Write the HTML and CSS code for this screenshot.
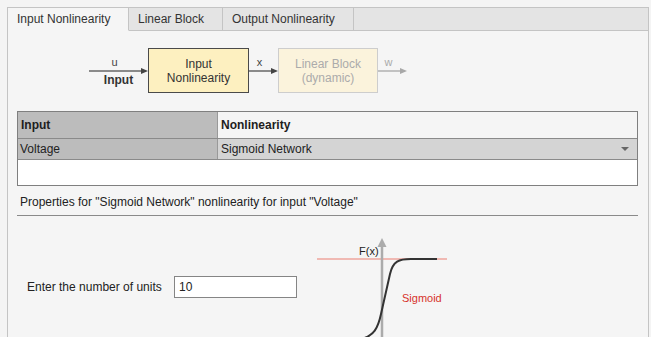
FILE: index.html
```html
<!DOCTYPE html>
<html lang="en">
<head>
    <meta charset="UTF-8">
    <title>Nonlinearity</title>
    <link rel="stylesheet" href="styles.css">
</head>
<body>

    <div class="panel">
        <div class="tabs">
            <div class="tab tab-on" style="width:121px">Input Nonlinearity</div>
            <div class="tab" style="width:94px">Linear Block</div>
            <div class="tab" style="width:131px">Output Nonlinearity</div>
            <div class="tab-fill"></div>
        </div>

        <div class="content">
            <!-- 模型结构图 -->
            <div class="diagram">
                <div class="wire wire-in">
                    <span class="wire-label">u</span>
                    <svg width="59" height="6" viewBox="0 0 59 6"><line x1="0" y1="3" x2="52" y2="3" stroke="#666" stroke-width="1.5"/><polygon points="52,0 59,3 52,6" fill="#444"/></svg>
                    <span class="wire-name">Input</span>
                </div>
                <div class="block">Input<br>Nonlinearity</div>
                <div class="wire wire-mid">
                    <span class="wire-label">x</span>
                    <svg width="29" height="6" viewBox="0 0 29 6"><line x1="0" y1="3" x2="22" y2="3" stroke="#666" stroke-width="1.5"/><polygon points="22,0 29,3 22,6" fill="#444"/></svg>
                    <span class="wire-name"></span>
                </div>
                <div class="block block-off">Linear Block<br>(dynamic)</div>
                <div class="wire wire-out">
                    <span class="wire-label">w</span>
                    <svg width="29" height="6" viewBox="0 0 29 6"><line x1="0" y1="3" x2="22" y2="3" stroke="#b0b0b0" stroke-width="1.5"/><polygon points="22,0 29,3 22,6" fill="#a8a8a8"/></svg>
                    <span class="wire-name"></span>
                </div>
            </div>

            <!-- 输入/非线性表格 -->
            <div class="grid">
                <div class="grid-row grid-head">
                    <div class="cell cell-key">Input</div>
                    <div class="cell">Nonlinearity</div>
                </div>
                <div class="grid-row grid-item">
                    <div class="cell cell-key">Voltage</div>
                    <div class="cell cell-pick">Sigmoid Network<span class="caret"></span></div>
                </div>
                <div class="grid-empty"></div>
            </div>

            <div class="props-title">Properties for "Sigmoid Network" nonlinearity for input "Voltage"</div>

            <div class="props">
                <div class="field">
                    <span class="field-label">Enter the number of units</span>
                    <input class="field-input" type="text" value="10">
                </div>
                <svg class="plot" width="140" height="125" viewBox="0 0 140 125">
                    <line x1="0" y1="29" x2="130" y2="29" stroke="#f0b9b3" stroke-width="2"/>
                    <line x1="65" y1="14" x2="65" y2="125" stroke="#ababab" stroke-width="2.5"/>
                    <polygon points="65,8 69.5,17 60.5,17" fill="#ababab"/>
                    <path d="M120,29 H94 C82,29 76,31 73,44 L64,84 C61,98 57,106 44,109 H20" fill="none" stroke="#333" stroke-width="2"/>
                    <text x="42" y="25" class="plot-text">F(x)</text>
                    <text x="85" y="72" class="plot-text plot-red">Sigmoid</text>
                    <text x="113" y="113" class="plot-text">x</text>
                </svg>
            </div>
        </div>
    </div>

</body>
</html>
```

FILE: styles.css
```css
html, body {
    margin: 0;
    height: 100%;
    overflow: hidden;
}

body {
    background: #f4f4f4;
    font-family: "Liberation Sans", Arial, sans-serif;
    font-size: 12px;
    color: #222;
}

/*外框*/
.panel {
    margin: 7px 0 0 7px;
    width: 642px;
    height: 400px;
    box-sizing: border-box;
    border-left: 1px solid #c4c4c4;
    border-right: 1px solid #c4c4c4;
    background: #f5f5f5;
}

/*------------------------------------*/
.tabs {
    display: flex;
    height: 24px;
    box-sizing: border-box;
    border-top: 1px solid #c4c4c4;
    background: #e4e4e4;
}
.tab {
    box-sizing: border-box;
    padding-left: 9px;
    line-height: 22px;
    border-right: 1px solid #c4c4c4;
    border-bottom: 1px solid #c4c4c4;
    color: #333;
    white-space: nowrap;
}
.tab-on {
    background: #f5f5f5;
    border-bottom-color: #f5f5f5;
}
.tab-fill {
    flex: 1;
    border-bottom: 1px solid #c4c4c4;
}

.content {
    padding: 17px 10px 0 9px;
}

/*------------------------------------*/
.diagram {
    display: flex;
    align-items: center;
    margin-left: 72px;
    height: 45px;
}
.wire {
    display: flex;
    flex-direction: column;
    align-items: center;
}
.wire svg {
    display: block;
}
.wire-label,
.wire-name {
    display: block;
    height: 12px;
    line-height: 12px;
    font-size: 11px;
    color: #444;
}
.wire-label {
    position: relative;
    left: -4px;
}
.wire-name {
    font-size: 12px;
    font-weight: bold;
    color: #333;
}
.wire-out .wire-label {
    color: #aaa;
}
.block {
    box-sizing: border-box;
    width: 101px;
    height: 45px;
    padding-top: 8px;
    border: 1px solid #4a4a4a;
    background: #fdf0c0;
    text-align: center;
    line-height: 14px;
    color: #333;
}
.block-off {
    width: 100px;
    border-color: #cdcdcd;
    background: #fbf3dc;
    color: #ababab;
}

/*------------------------------------*/
.grid {
    margin-top: 18px;
    border: 1px solid #7f7f7f;
    background: #fff;
}
.grid-row {
    display: grid;
    grid-template-columns: 200px 1fr;
    border-bottom: 1px solid #8a8a8a;
}
.cell {
    padding-left: 3px;
}
.cell-key {
    border-right: 1px solid #999;
    background: #bcbcbc;
}
.grid-head {
    height: 27px;
    box-sizing: border-box;
    line-height: 26px;
    font-weight: bold;
    color: #1e1e1e;
    background: #f5f5f5;
}
.grid-item {
    height: 21px;
    box-sizing: border-box;
    line-height: 20px;
    background: #d4d4d4;
}
.grid-item .cell-key {
    padding-left: 2px;
}
.cell-pick {
    display: flex;
    justify-content: space-between;
    align-items: center;
    padding-right: 8px;
}
.caret {
    width: 0;
    height: 0;
    border-left: 4px solid transparent;
    border-right: 4px solid transparent;
    border-top: 4px solid #666;
}
.grid-empty {
    height: 25px;
}

.props-title {
    margin-top: 9px;
    padding: 0 0 6px 3px;
    line-height: 14px;
    border-bottom: 1px solid #8a8a8a;
}

/*------------------------------------*/
.props {
    display: flex;
    align-items: flex-start;
}
.field {
    display: flex;
    align-items: center;
    margin: 60px 0 0 10px;
}
.field-label {
    width: 147px;
}
.field-input {
    box-sizing: border-box;
    width: 123px;
    height: 22px;
    margin: 0;
    padding: 0 4px;
    border: 1px solid #858585;
    background: #fff;
    font-family: "Liberation Sans", Arial, sans-serif;
    font-size: 12px;
    color: #222;
    outline: none;
}
.plot {
    display: block;
    margin: 14px 0 0 20px;
}
.plot-text {
    font-family: "Liberation Sans", Arial, sans-serif;
    font-size: 11px;
    fill: #222;
}
.plot-red {
    fill: #d7322b;
}
```
